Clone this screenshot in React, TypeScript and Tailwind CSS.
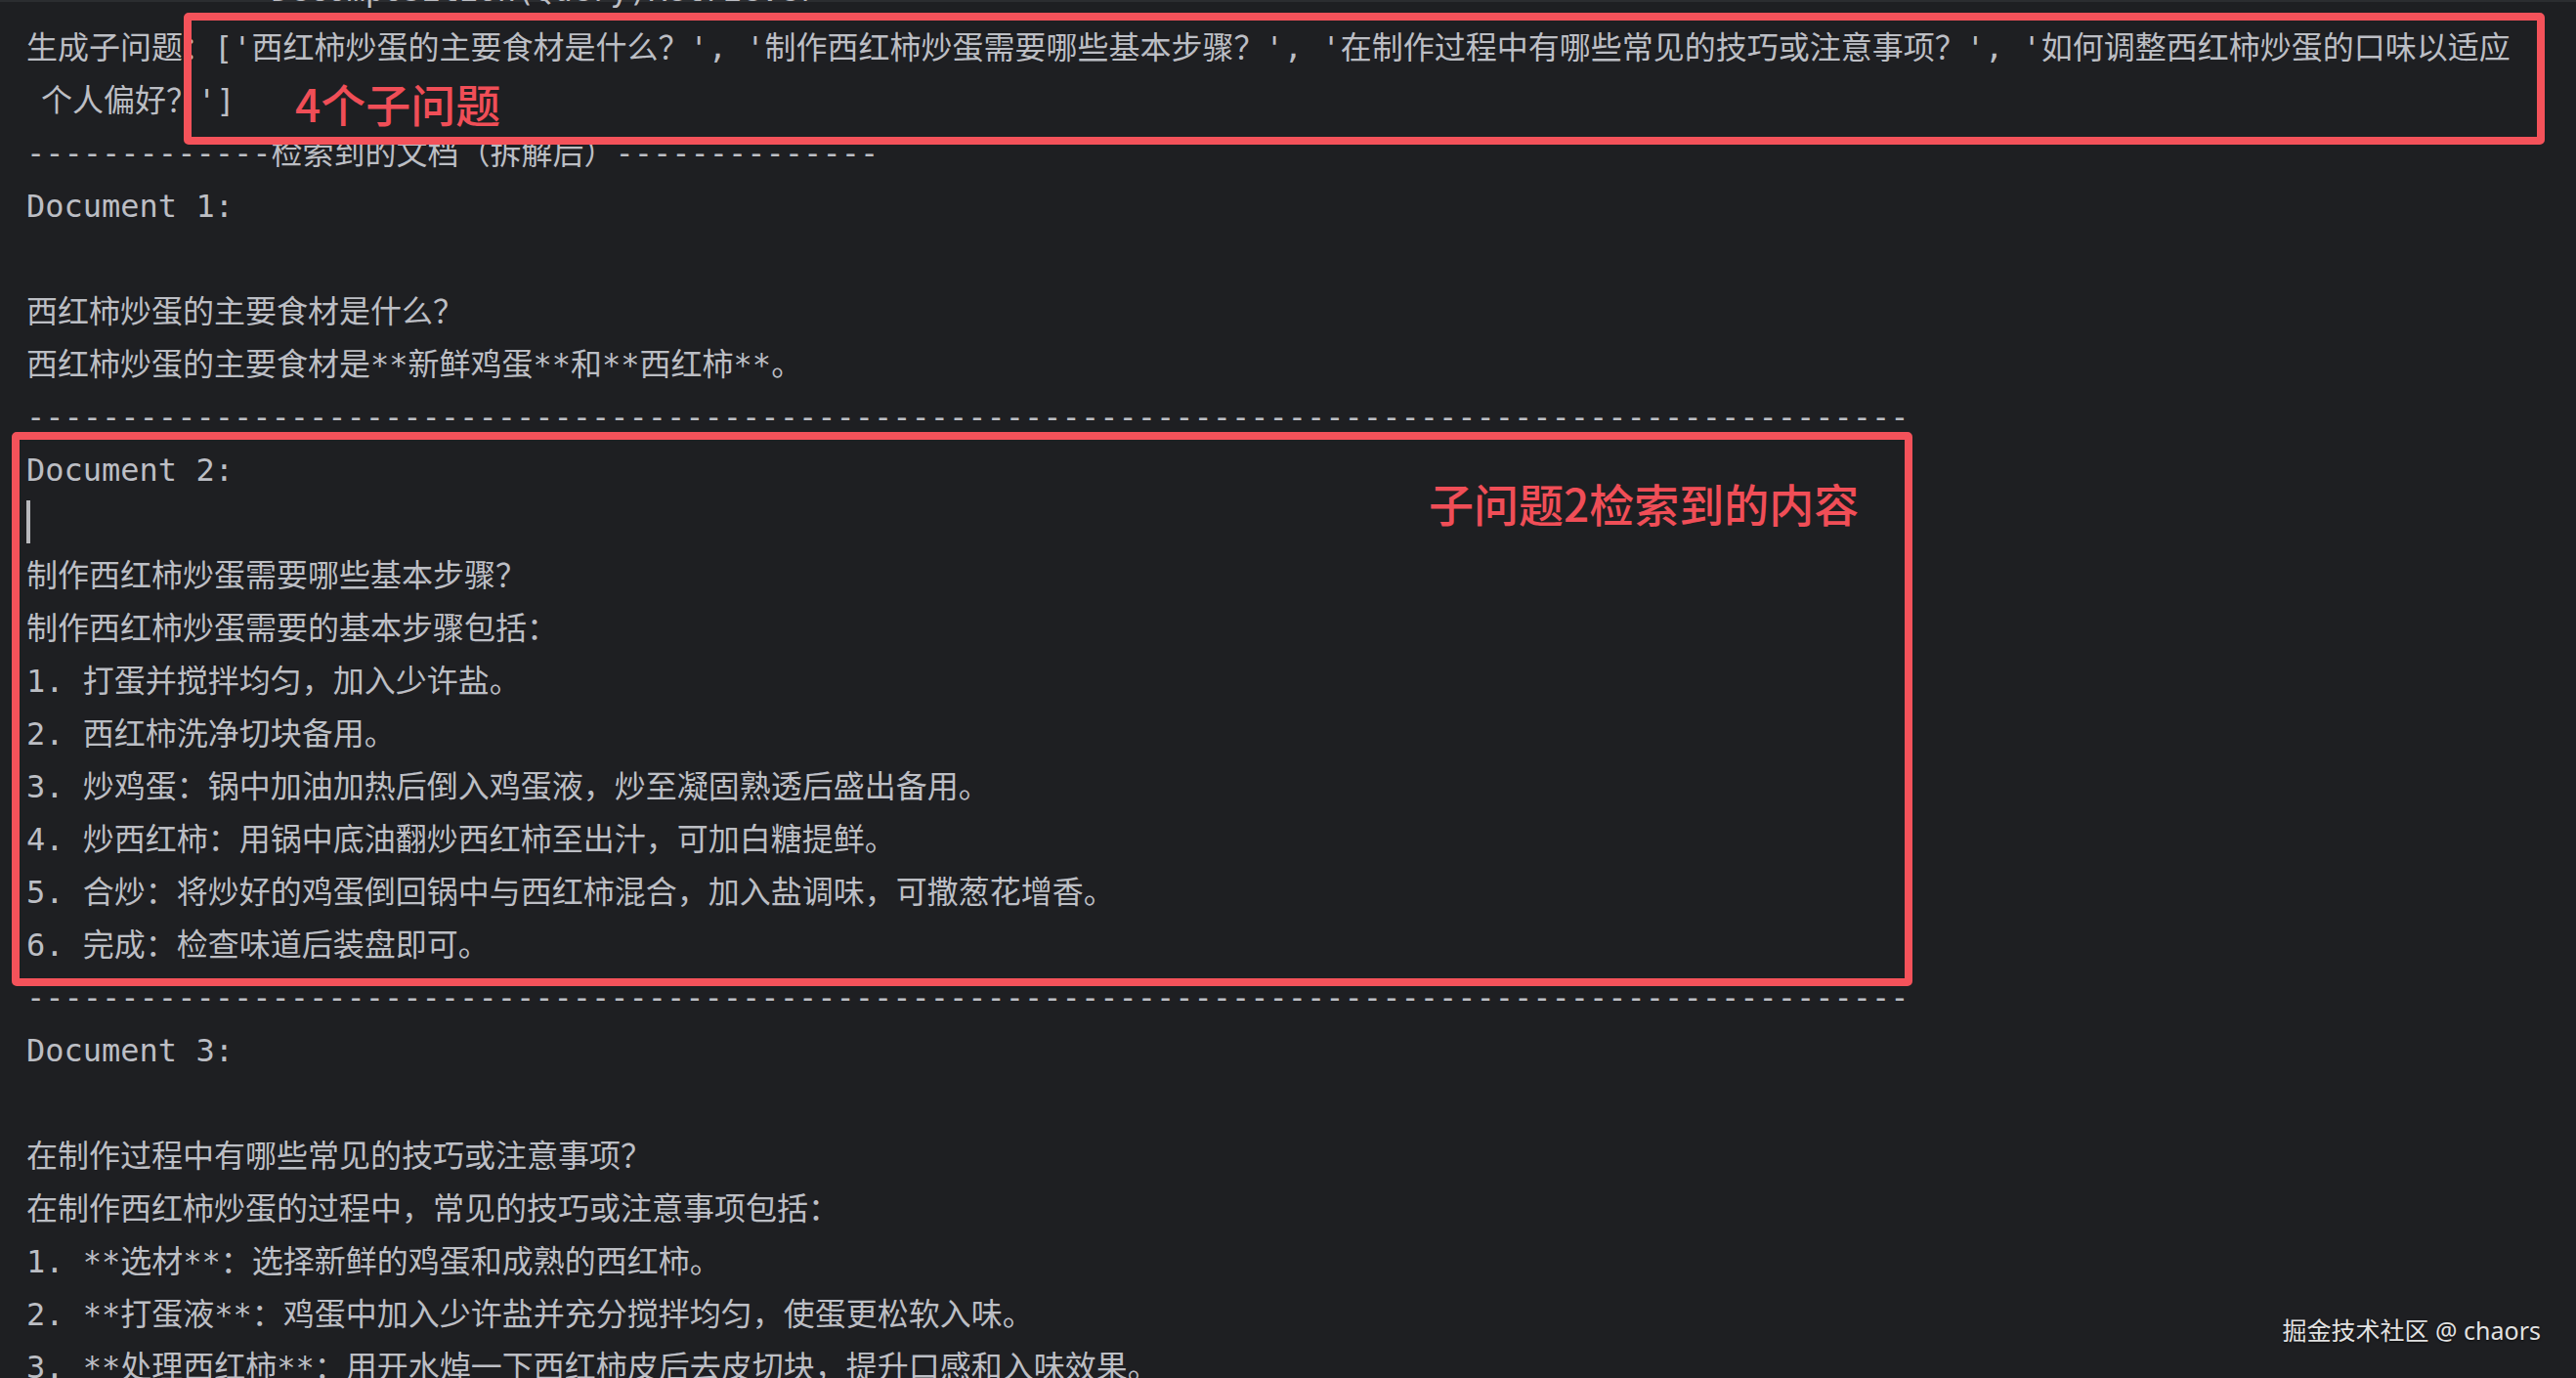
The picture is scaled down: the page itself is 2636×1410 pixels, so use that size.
import React from "react";

const DASHES_100 = "-".repeat(100);

type Line = { text?: string; pad?: boolean; cursor?: boolean };

const lines: Line[] = [
  { text: "生成子问题：['西红柿炒蛋的主要食材是什么？', '制作西红柿炒蛋需要哪些基本步骤？', '在制作过程中有哪些常见的技巧或注意事项？', '如何调整西红柿炒蛋的口味以适应" },
  { text: "个人偏好？']", pad: true },
  { text: "-------------检索到的文档（拆解后）--------------" },
  { text: "Document 1:" },
  { text: "" },
  { text: "西红柿炒蛋的主要食材是什么？" },
  { text: "西红柿炒蛋的主要食材是**新鲜鸡蛋**和**西红柿**。" },
  { text: DASHES_100 },
  { text: "Document 2:" },
  { cursor: true },
  { text: "制作西红柿炒蛋需要哪些基本步骤？" },
  { text: "制作西红柿炒蛋需要的基本步骤包括：" },
  { text: "1. 打蛋并搅拌均匀，加入少许盐。" },
  { text: "2. 西红柿洗净切块备用。" },
  { text: "3. 炒鸡蛋：锅中加油加热后倒入鸡蛋液，炒至凝固熟透后盛出备用。" },
  { text: "4. 炒西红柿：用锅中底油翻炒西红柿至出汁，可加白糖提鲜。" },
  { text: "5. 合炒：将炒好的鸡蛋倒回锅中与西红柿混合，加入盐调味，可撒葱花增香。" },
  { text: "6. 完成：检查味道后装盘即可。" },
  { text: DASHES_100 },
  { text: "Document 3:" },
  { text: "" },
  { text: "在制作过程中有哪些常见的技巧或注意事项？" },
  { text: "在制作西红柿炒蛋的过程中，常见的技巧或注意事项包括：" },
  { text: "1. **选材**：选择新鲜的鸡蛋和成熟的西红柿。" },
  { text: "2. **打蛋液**：鸡蛋中加入少许盐并充分搅拌均匀，使蛋更松软入味。" },
  { text: "3. **处理西红柿**：用开水焯一下西红柿皮后去皮切块，提升口感和入味效果。" },
];

export default function App() {
  return (
    <div className="relative w-[2636px] h-[1410px] overflow-hidden bg-[#1e1f22]">
      <div className="h-[2px] bg-[#2b2d30]" />
      <div className="pl-[27px] mt-[-34px] text-[32px] text-[#bcbec4] font-[family-name:'DejaVu_Sans_Mono','Noto_Sans_CJK_SC',monospace]">
        <div className="h-[54px] leading-[44px] whitespace-pre overflow-visible">
          -------------Decomposition(Query)Retriever-------------
        </div>
        {lines.map((l, i) =>
          l.cursor ? (
            <div key={i} className="h-[54px] flex items-start">
              <div className="mt-[4px] w-[4px] h-[44px] bg-[#b8b9bd]" />
            </div>
          ) : (
            <div
              key={i}
              className={
                l.pad
                  ? "h-[54px] leading-[54px] whitespace-pre pl-[15px]"
                  : "h-[54px] leading-[54px] whitespace-pre"
              }
            >
              {l.text}
            </div>
          )
        )}
      </div>

      {/* annotation box 1 */}
      <div className="absolute left-[188px] top-[13px] w-[2416px] h-[135px] border-[8px] border-[#f4525a] rounded-[5px]" />
      <div className="absolute left-[302px] top-[80px] leading-[50px] text-[46px] font-medium text-[#f04e57] font-[family-name:'Noto_Sans_CJK_SC',sans-serif]">
        4个子问题
      </div>

      {/* annotation box 2 */}
      <div className="absolute left-[12px] top-[442px] w-[1945px] h-[567px] border-[8px] border-[#f4525a] rounded-[5px]" />
      <div className="absolute left-[1462px] top-[489px] leading-[50px] text-[46px] font-medium text-[#f04e57] font-[family-name:'Noto_Sans_CJK_SC',sans-serif]">
        子问题2检索到的内容
      </div>

      {/* watermark */}
      <div className="absolute right-[36px] top-[1344px] leading-[34px] text-[25px] text-[#e2e2e2] [text-shadow:0_1px_2px_rgba(0,0,0,0.6)] font-[family-name:'Noto_Sans','Noto_Sans_CJK_SC',sans-serif]">
        掘金技术社区 @ chaors
      </div>
    </div>
  );
}
